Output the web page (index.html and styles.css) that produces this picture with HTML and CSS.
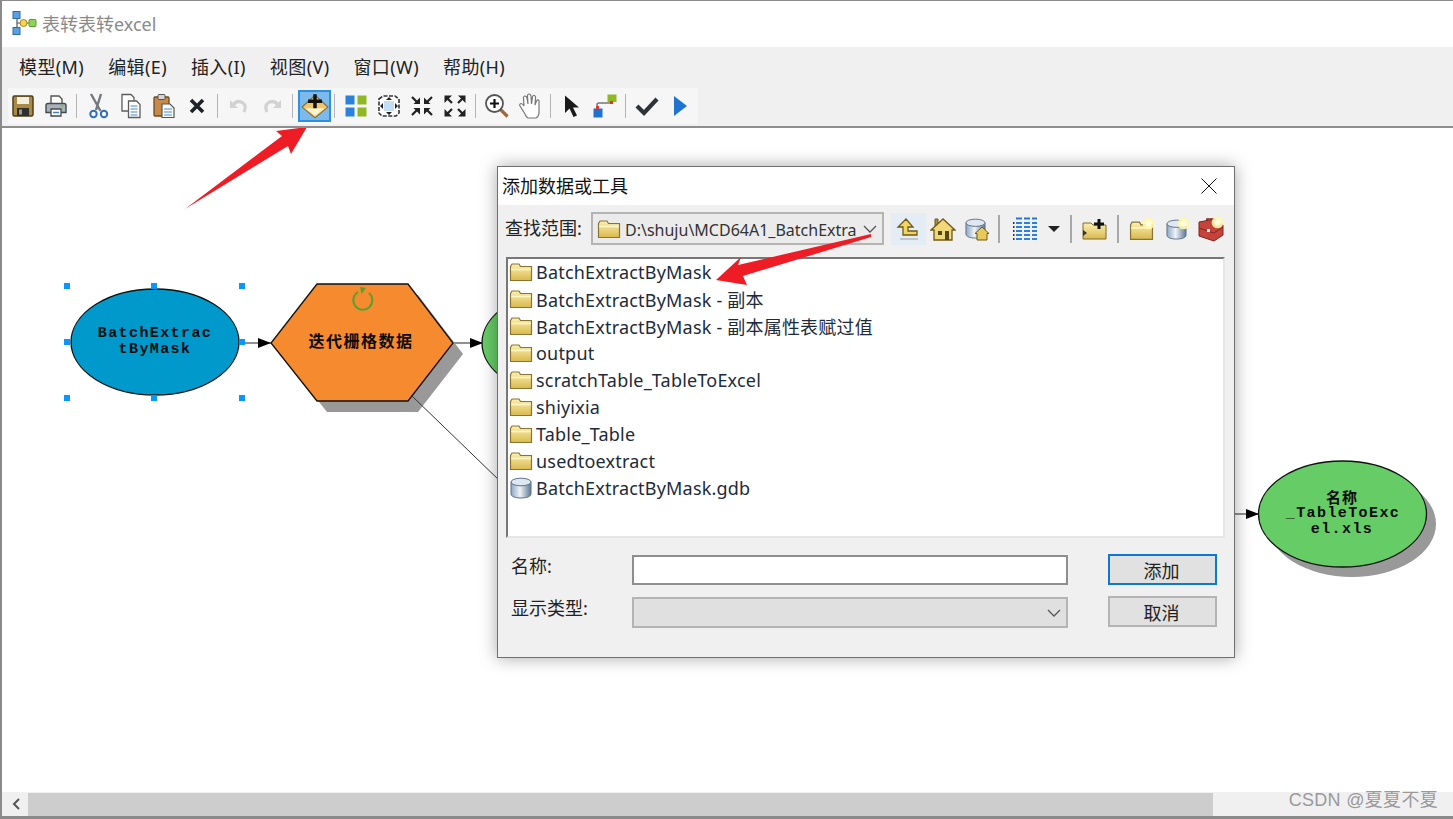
FILE: index.html
```html
<!DOCTYPE html>
<html lang="zh-CN">
<head>
  <meta charset="UTF-8">
  <title>表转表转excel</title>
  <link rel="stylesheet" href="styles.css">
</head>
<body>
  <!-- shared icon shapes -->
  <svg class="defs" width="0" height="0">
    <defs>
      <linearGradient id="gold" x1="0" y1="0" x2="0" y2="1">
        <stop offset="0" stop-color="#fbf0b0"/>
        <stop offset="1" stop-color="#d9b94f"/>
      </linearGradient>
      <linearGradient id="cyl" x1="0" y1="0" x2="1" y2="0">
        <stop offset="0" stop-color="#8fa6c0"/>
        <stop offset=".45" stop-color="#eef3f8"/>
        <stop offset="1" stop-color="#5f7794"/>
      </linearGradient>
      <symbol id="folder" viewBox="0 0 24 20">
        <path d="M1.500 4.500 3 2h7l1.500 2.500h11V18.500h-21z" fill="url(#gold)" stroke="#8a7433" stroke-width="1.200"/>
        <path d="M2 7.500h20" stroke="#fff6c8" stroke-width="1.500"/>
      </symbol>
      <symbol id="gdb" viewBox="0 0 24 22">
        <path d="M2 5v12c0 2.500 4.500 4 10 4s10-1.500 10-4V5z" fill="url(#cyl)" stroke="#5d728c"/>
        <ellipse cx="12" cy="5" rx="10" ry="3.800" fill="#dfe8f1" stroke="#5d728c"/>
      </symbol>
      <symbol id="spark" viewBox="0 0 10 10">
        <circle cx="5" cy="5" r="4.500" fill="#fff7a8" opacity=".9"/>
        <circle cx="5" cy="5" r="2.400" fill="#fffde0"/>
      </symbol>
    </defs>
  </svg>

  <div class="window">
    <div class="titlebar">
      <svg class="app-icon" width="26" height="26" viewBox="0 0 26 26">
        <path d="M5 5v16M5 13h16" stroke="#555" stroke-width="1.200" fill="none"/>
        <rect x="1" y="1.500" width="7" height="7" fill="#5c9fe0" stroke="#2d6cab"/>
        <rect x="1" y="17.500" width="7" height="7" fill="#5c9fe0" stroke="#2d6cab"/>
        <circle cx="11.500" cy="13" r="3.500" fill="#f6d64a" stroke="#a8871c"/>
        <rect x="17" y="9.500" width="7" height="7" rx="1" fill="#8ed05a" stroke="#5b9a2e"/>
      </svg>
      <span class="title-text">表转表转excel</span>
    </div>

    <div class="menubar">
      <span>模型(M)</span>
      <span>编辑(E)</span>
      <span>插入(I)</span>
      <span>视图(V)</span>
      <span>窗口(W)</span>
      <span>帮助(H)</span>
    </div>

    <div class="toolbar-row">
      <div class="toolbar">
        <div class="tb"><svg width="24" height="24" viewBox="0 0 24 24">
          <rect x="2" y="2" width="20" height="20" rx="1.500" fill="#a88a45" stroke="#4e3f1c" stroke-width="1.500"/>
          <rect x="6" y="3" width="12" height="7" fill="#f2eddc"/>
          <rect x="6" y="14" width="12" height="8" fill="#2f2f2f"/>
          <rect x="8" y="15.500" width="3" height="5" fill="#9a9a9a"/>
        </svg></div>
        <div class="tb"><svg width="24" height="24" viewBox="0 0 24 24">
          <path d="M7 10V2h8l3 3v5z" fill="#fff" stroke="#555" stroke-width="1.400"/>
          <path d="M2 11.500q0-2 2-2h16q2 0 2 2v7H2z" fill="#a9b1b8" stroke="#444a4e" stroke-width="1.400"/>
          <path d="M7 15h10v7H7z" fill="#fff" stroke="#444a4e" stroke-width="1.300"/>
          <path d="M9 18.500h6" stroke="#3a82c4" stroke-width="1.500"/>
          <circle cx="18.500" cy="12" r="1" fill="#63c04a"/>
        </svg></div>
        <i class="sep"></i>
        <div class="tb"><svg width="24" height="26" viewBox="0 0 24 26">
          <path d="M5 1l9.500 17M15 1 10 17" stroke="#74797e" stroke-width="2.400" fill="none"/>
          <circle cx="7.500" cy="21" r="3.200" fill="none" stroke="#2f6fb4" stroke-width="2"/>
          <circle cx="18" cy="21" r="3.200" fill="none" stroke="#2f6fb4" stroke-width="2"/>
        </svg></div>
        <div class="tb"><svg width="24" height="26" viewBox="0 0 24 26">
          <path d="M3 1.500h9l3 3V18H3z" fill="#fff" stroke="#5c5c5c" stroke-width="1.300"/>
          <path d="M9.500 8h8l3.500 3.500V24.500H9.500z" fill="#fff" stroke="#5c5c5c" stroke-width="1.300"/>
          <path d="M11.500 13h7M11.500 16h7M11.500 19h7M11.500 22h7" stroke="#4a86c5" stroke-width="1.200"/>
        </svg></div>
        <div class="tb"><svg width="24" height="26" viewBox="0 0 24 26">
          <rect x="2" y="4" width="15" height="19" rx="1" fill="#c48a4a" stroke="#6e4a20" stroke-width="1.300"/>
          <rect x="6" y="1.500" width="7" height="5" rx="1" fill="#d6d6d6" stroke="#555"/>
          <path d="M10 11h8l4 4v9.500H10z" fill="#fff" stroke="#555" stroke-width="1.200"/>
          <path d="M12 16h8M12 19h8M12 22h8" stroke="#4a86c5" stroke-width="1.200"/>
        </svg></div>
        <div class="tb"><svg width="18" height="18" viewBox="0 0 18 18">
          <path d="M3 3l12 12M15 3 3 15" stroke="#1e2226" stroke-width="3.600"/>
        </svg></div>
        <i class="sep"></i>
        <div class="tb"><svg width="24" height="24" viewBox="0 0 24 24">
          <path d="M5 12q5-7 11-3 4 3 1 9" fill="none" stroke="#d2d2d2" stroke-width="3.200"/>
          <path d="M3 6v8h8z" fill="#d2d2d2"/>
        </svg></div>
        <div class="tb"><svg width="24" height="24" viewBox="0 0 24 24">
          <path d="M19 12q-5-7-11-3-4 3-1 9" fill="none" stroke="#d2d2d2" stroke-width="3.200"/>
          <path d="M21 6v8h-8z" fill="#d2d2d2"/>
        </svg></div>
        <i class="sep"></i>
        <div class="tb tb-active"><svg width="28" height="28" viewBox="0 0 26 26">
          <path d="M13 3 25 14 13 24 1 14z" fill="#f0c768" stroke="#7d6a3a"/>
          <path d="M4 15h18l-9 7z" fill="#fdf3cf"/>
          <path d="M13 2v13M6.500 8.500h13" stroke="#111" stroke-width="3.200"/>
        </svg></div>
        <i class="sep"></i>
        <div class="tb"><svg width="24" height="24" viewBox="0 0 24 24">
          <rect x="1.500" y="1.500" width="9" height="9" fill="#2b82dc"/>
          <rect x="13.500" y="1.500" width="9" height="9" fill="#8fb822"/>
          <rect x="1.500" y="13.500" width="9" height="9" fill="#2b82dc"/>
          <rect x="13.500" y="13.500" width="9" height="9" fill="#8fb822"/>
        </svg></div>
        <div class="tb"><svg width="24" height="24" viewBox="0 0 24 24">
          <path d="M2 5l4-3h12l4 3v14l-3 3H5l-3-3z" fill="#fff" stroke="#333" stroke-width="1.600" stroke-dasharray="4 1.500"/>
          <rect x="7" y="7" width="10" height="10" fill="#c4dcf4"/>
          <path d="M12 3l3 3H9zM12 21l3-3H9zM3 12l3-3v6zM21 12l-3-3v6z" fill="#222"/>
        </svg></div>
        <div class="tb"><svg width="24" height="24" viewBox="0 0 24 24">
          <path d="M2 3l5 5M22 3l-5 5M2 21l5-5M22 21l-5-5" stroke="#222" stroke-width="2.200"/>
          <path d="M10 10V3.500L3.500 10zM14 10V3.500l6.500 6.500zM10 14v6.500L3.500 14zM14 14v6.500l6.500-6.500z" fill="#222"/>
        </svg></div>
        <div class="tb"><svg width="24" height="24" viewBox="0 0 24 24">
          <path d="M9 9 4 4M15 9l5-5M9 15l-5 5M15 15l5 5" stroke="#222" stroke-width="2.200"/>
          <path d="M1.500 1.500h7.500L1.500 9zM22.500 1.500H15l7.500 7.500zM1.500 22.500H9L1.500 15zM22.500 22.500H15l7.500-7.500z" fill="#222"/>
        </svg></div>
        <i class="sep"></i>
        <div class="tb"><svg width="26" height="26" viewBox="0 0 26 26">
          <path d="m16.500 16.500 7 7" stroke="#a5673a" stroke-width="3.200"/>
          <circle cx="10.500" cy="10.500" r="8.500" fill="#fff" stroke="#555" stroke-width="1.800"/>
          <path d="M10.500 6v9M6 10.500h9" stroke="#111" stroke-width="2.200"/>
        </svg></div>
        <div class="tb"><svg width="26" height="26" viewBox="0 0 26 26">
          <path d="M8 21 3 13q-1-2 1-2.500 1.500 0 3 2.500L6.500 5q0-2 1.500-2 1.500 0 2 2l1 6-.5-8q0-2 1.500-2t2 2l.5 8 1-7q.5-2 2-1.500 1.500.5 1 2.500l-.5 7 1.500-4q1-1.500 2-1 1 .5.500 2.500L22 20q-.5 4-3 5H11q-2-1-3-4z" fill="#fff" stroke="#777" stroke-width="1.200"/>
        </svg></div>
        <i class="sep"></i>
        <div class="tb"><svg width="20" height="24" viewBox="0 0 20 24">
          <path d="M3 1.500 17 13.500h-6l4 8-3.500 1.500-4-8.500L3 19z" fill="#1a1a1a"/>
        </svg></div>
        <div class="tb"><svg width="26" height="26" viewBox="0 0 26 26">
          <path d="M5 17v-5q0-2 2-2h10q2 0 2-2V6" fill="none" stroke="#777" stroke-width="1.500"/>
          <rect x="1.500" y="15.500" width="9" height="9" fill="#1f73d0"/>
          <rect x="15.500" y="1.500" width="9" height="7.500" fill="#8fb822"/>
          <rect x="4" y="13" width="3" height="3" fill="#e5322d"/>
          <rect x="18" y="8" width="3" height="3" fill="#e5322d"/>
        </svg></div>
        <i class="sep"></i>
        <div class="tb"><svg width="24" height="22" viewBox="0 0 24 22">
          <path d="M2 11l7 7L22 4" fill="none" stroke="#2e3338" stroke-width="4.200"/>
        </svg></div>
        <div class="tb"><svg width="16" height="24" viewBox="0 0 16 24">
          <path d="M2 2 15 12 2 22z" fill="#1f74d2"/>
        </svg></div>
      </div>
    </div>

    <div class="canvas">
      <svg class="model" viewBox="0 127 1453 666" preserveAspectRatio="none">
        <!-- connectors -->
        <path class="link" d="M238 342h33M453 342h30M1235 513h24"/>
        <path d="M258 337l13 5-13 5zM470 337l13 5-13 5zM1246 508l13 5-13 5z" fill="#000"/>

        <!-- input data -->
        <ellipse class="oval-blue" cx="155" cy="341" rx="84" ry="53"/>
        <text class="node-en" x="155" y="336">BatchExtrac</text>
        <text class="node-en" x="155" y="352">tByMask</text>
        <rect class="handle" x="64" y="282" width="6" height="6"/>
        <rect class="handle" x="151" y="282" width="6" height="6"/>
        <rect class="handle" x="239" y="282" width="6" height="6"/>
        <rect class="handle" x="64" y="338" width="6" height="6"/>
        <rect class="handle" x="239" y="338" width="6" height="6"/>
        <rect class="handle" x="64" y="394" width="6" height="6"/>
        <rect class="handle" x="151" y="394" width="6" height="6"/>
        <rect class="handle" x="239" y="394" width="6" height="6"/>

        <!-- iterator -->
        <polygon class="shadow" points="327,294 418,294 463,353 418,411 327,411 281,353"/>
        <polygon class="hex" points="317,283 408,283 453,342 408,400 317,400 271,342"/>
        <path class="link link-thin" d="M412 395l90 87"/>
        <path d="M369 292a9.500 9.500 0 1 1-11-1" fill="none" stroke="#5aa02c" stroke-width="2"/>
        <path d="M360 286l1.500 7 4.500-6z" fill="#5aa02c"/>
        <text class="node-cn" x="361" y="346">迭代栅格数据</text>

        <!-- hidden behind the dialog -->
        <ellipse class="oval-green" cx="566" cy="342" rx="84" ry="53"/>

        <!-- output -->
        <ellipse class="shadow" cx="1352" cy="523" rx="84" ry="53"/>
        <ellipse class="oval-green" cx="1342.500" cy="513" rx="84" ry="53"/>
        <text class="node-cn node-small" x="1342" y="502">名称</text>
        <text class="node-en" x="1343" y="516">_TableToExc</text>
        <text class="node-en" x="1342" y="532">el.xls</text>
      </svg>

      <div class="dialog">
        <div class="dlg-title">
          <span>添加数据或工具</span>
          <svg width="16" height="16" viewBox="0 0 16 16"><path d="M.5.500l15 15M15.500.500l-15 15" stroke="#111" stroke-width="1"/></svg>
        </div>
        <div class="dlg-body">
          <div class="lookup">
            <label class="lookup-label">查找范围:</label>
            <div class="combo">
              <svg class="combo-icon" width="24" height="20"><use href="#folder"/></svg>
              <span class="combo-text">D:\shuju\MCD64A1_BatchExtra</span>
              <svg class="chev" width="14" height="8" viewBox="0 0 14 8"><path d="M1 1l6 6 6-6" fill="none" stroke="#555" stroke-width="1.300"/></svg>
            </div>
            <div class="dlg-tools">
              <div class="dt dt-on"><svg width="24" height="24" viewBox="0 0 24 24">
                <path d="M10 2 2 10h5v8h14v-4H12v-4h5z" fill="#f0d660" stroke="#6e5a14" stroke-width="1.300"/>
                <path d="M4 22h18" stroke="#aaa" stroke-width="1.200"/>
              </svg></div>
              <div class="dt"><svg width="26" height="24" viewBox="0 0 26 24">
                <path d="M5 11V2h3v5z" fill="#a88f3e" stroke="#6e5a14"/>
                <path d="M13 2 1 13h3v10h18V13h3z" fill="#f0d878" stroke="#6e5a14" stroke-width="1.300"/>
                <rect x="8" y="14" width="4" height="4" fill="#54461a"/>
                <rect x="15" y="14" width="4" height="9" fill="#54461a"/>
              </svg></div>
              <div class="dt"><svg width="26" height="24" viewBox="0 0 26 24">
                <use href="#gdb" x="0" y="1" width="23" height="21"/>
                <path d="M18 10l-7 6.500h2V23h10v-6.500h2z" fill="#e8ca5a" stroke="#6e5a14"/>
              </svg></div>
              <i class="sep sep-dlg"></i>
              <div class="dt dt-grid"><svg width="26" height="24" viewBox="0 0 26 24">
                <path d="M4 1.500h6M12 1.500h6M20 1.500h5" stroke="#2a74c8" stroke-width="2"/>
                <path d="M4 6h6M12 6h6M20 6h5M4 10h6M12 10h6M20 10h5M4 14h6M12 14h6M20 14h5M4 18h6M12 18h6M20 18h5M4 22h6M12 22h6M20 22h5" stroke="#2e80d6" stroke-width="2.200"/>
                <path d="M1 6h1.500M1 10h1.500M1 14h1.500M1 18h1.500M1 22h1.500" stroke="#333" stroke-width="2"/>
              </svg></div>
              <div class="caret"></div>
              <i class="sep sep-dlg"></i>
              <div class="dt"><svg width="26" height="24" viewBox="0 0 26 24">
                <path d="M2 22V6h8l2 2h13v14z" fill="url(#gold)" stroke="#7d6a2a"/>
                <path d="M2 13l4 3-4 3z" fill="#333"/>
                <path d="M18 2v10M13 7h10" stroke="#111" stroke-width="3"/>
              </svg></div>
              <i class="sep sep-dlg sep-wide"></i>
              <div class="dt"><svg width="26" height="24" viewBox="0 0 26 24">
                <use href="#folder" x="0" y="3" width="25" height="21"/>
                <use href="#spark" x="13" y="0" width="13" height="13"/>
              </svg></div>
              <div class="dt"><svg width="26" height="24" viewBox="0 0 26 24">
                <use href="#gdb" x="1" y="2" width="23" height="21"/>
                <use href="#spark" x="13" y="0" width="13" height="13"/>
              </svg></div>
              <div class="dt"><svg width="26" height="26" viewBox="0 0 26 26">
                <path d="M9 6V3h7v3" fill="none" stroke="#7e2620" stroke-width="1.600"/>
                <path d="M1 6l16-3 8 6v10l-9 6-15-5z" fill="#c5433a" stroke="#7e2620"/>
                <path d="M1 12l15 5 9-6" fill="none" stroke="#7e2620"/>
                <rect x="9" y="13" width="3" height="3" fill="#eee"/>
                <use href="#spark" x="13" y="0" width="13" height="13"/>
              </svg></div>
            </div>
          </div>

          <div class="file-list">
            <div class="file"><svg width="24" height="20"><use href="#folder"/></svg><span>BatchExtractByMask</span></div>
            <div class="file"><svg width="24" height="20"><use href="#folder"/></svg><span>BatchExtractByMask - 副本</span></div>
            <div class="file"><svg width="24" height="20"><use href="#folder"/></svg><span>BatchExtractByMask - 副本属性表赋过值</span></div>
            <div class="file"><svg width="24" height="20"><use href="#folder"/></svg><span>output</span></div>
            <div class="file"><svg width="24" height="20"><use href="#folder"/></svg><span>scratchTable_TableToExcel</span></div>
            <div class="file"><svg width="24" height="20"><use href="#folder"/></svg><span>shiyixia</span></div>
            <div class="file"><svg width="24" height="20"><use href="#folder"/></svg><span>Table_Table</span></div>
            <div class="file"><svg width="24" height="20"><use href="#folder"/></svg><span>usedtoextract</span></div>
            <div class="file"><svg width="24" height="22"><use href="#gdb"/></svg><span>BatchExtractByMask.gdb</span></div>
          </div>

          <div class="form">
            <label class="form-label">名称:</label>
            <div class="input"></div>
            <div class="btn btn-default">添加</div>
            <label class="form-label">显示类型:</label>
            <div class="select">
              <svg width="14" height="8" viewBox="0 0 14 8"><path d="M1 1l6 6 6-6" fill="none" stroke="#555" stroke-width="1.300"/></svg>
            </div>
            <div class="btn">取消</div>
          </div>
        </div>
      </div>

      <!-- annotation arrows -->
      <svg class="marks" viewBox="0 127 1453 666" preserveAspectRatio="none">
        <polygon fill="#ee1c25" points="185,208 282,135 276,130 307,126 291,153 288,145"/>
        <polygon fill="#ee1c25" points="871,233 738,264 741,256 716,279 747,284 743,275 871,236"/>
      </svg>
    </div>

    <div class="hscroll">
      <svg width="24" height="24" viewBox="0 0 24 24"><path d="M15 7l-5 5 5 5" fill="none" stroke="#555" stroke-width="2"/></svg>
      <div class="hscroll-thumb"></div>
    </div>
  </div>

  <div class="watermark">CSDN @夏夏不夏</div>
</body>
</html>
```

FILE: styles.css
```css
body {
  margin: 0;
  padding: 0;
  background: #fff;
  font-family: "Noto Sans", "Noto Sans CJK SC", sans-serif;
  color: #222;
  overflow: hidden;
}

.defs {
  position: absolute;
}

.window {
  height: 819px;
  display: flex;
  flex-direction: column;
  box-sizing: border-box;
  border-top: 1px solid #8a8a8a;
  border-left: 2px solid #8a8a8a;
  border-bottom: 3px solid #8a8a8a;
  position: relative;
}

.titlebar {
  height: 46px;
  box-sizing: border-box;
  display: flex;
  align-items: center;
  padding: 0 0 2px 10px;
  gap: 4px;
  flex-shrink: 0;
}

.title-text {
  font-size: 18px;
  color: #8a8a8a;
}

.menubar {
  height: 41px;
  box-sizing: border-box;
  flex-shrink: 0;
  background: #f0f0f0;
  display: flex;
  align-items: center;
  gap: 24px;
  padding: 0 0 3px 17px;
  font-size: 18px;
  letter-spacing: 0.4px;
}

.toolbar-row {
  height: 38px;
  flex-shrink: 0;
  background: #f0f0f0;
  border-bottom: 2px solid #8e8e8e;
  box-sizing: content-box;
}

.toolbar {
  width: 690px;
  height: 36px;
  margin-left: 6px;
  background: #f6f6f6;
  display: flex;
  align-items: center;
}

.tb {
  width: 33px;
  height: 32px;
  display: flex;
  align-items: center;
  justify-content: center;
  flex-shrink: 0;
}

.tb:first-child {
  margin-left: -2px;
}

.tb-active {
  box-sizing: border-box;
  background: #7db9ea;
  border: 2px solid #2b90e0;
  margin-left: 1px;
  margin-right: -1px;
}

.sep {
  width: 1px;
  height: 24px;
  margin: 0 4px;
  background: #b5b5b5;
  flex-shrink: 0;
}

.canvas {
  flex: 1;
  position: relative;
  overflow: hidden;
  background: #fff;
}

.model,
.marks {
  display: block;
  width: 1453px;
  height: 666px;
  margin-left: -2px;
}

.marks {
  position: absolute;
  left: 0;
  top: 0;
  pointer-events: none;
}

.link {
  fill: none;
  stroke: #222;
  stroke-width: 1.200;
}

.link-thin {
  stroke: #333;
  stroke-width: 1;
}

.oval-blue {
  fill: #0099cc;
  stroke: #111;
  stroke-width: 1.300;
}

.oval-green {
  fill: #66cc66;
  stroke: #111;
  stroke-width: 1.300;
}

.hex {
  fill: #f68a2e;
  stroke: #111;
  stroke-width: 1.300;
}

.shadow {
  fill: #999;
}

.handle {
  fill: #0a96ff;
}

.node-en {
  font-family: "Liberation Mono", monospace;
  font-weight: bold;
  font-size: 15px;
  letter-spacing: 1.400px;
  text-anchor: middle;
  fill: #0c0c0c;
}

.node-cn {
  font-family: "Noto Sans CJK SC", sans-serif;
  font-weight: bold;
  font-size: 16px;
  letter-spacing: 1.500px;
  text-anchor: middle;
  fill: #0c0c0c;
}

.node-small {
  font-size: 15px;
  letter-spacing: 1px;
}

/* dialog sits over the model */
.dialog {
  position: absolute;
  left: 495px;
  top: 38px;
  width: 738px;
  height: 492px;
  box-sizing: border-box;
  border: 1px solid #6f6f6f;
  background: #f0f0f0;
  box-shadow: 0 0 16px rgba(0, 0, 0, 0.35);
  display: flex;
  flex-direction: column;
}

.dlg-title {
  height: 38px;
  box-sizing: border-box;
  flex-shrink: 0;
  background: #fff;
  display: flex;
  align-items: center;
  justify-content: space-between;
  padding: 0 17px 3px 4px;
  font-size: 18px;
  color: #111;
}

.dlg-title svg {
  margin-top: 3px;
}

.dlg-body {
  padding: 7px 0 0 8px;
}

.lookup {
  height: 33px;
  display: flex;
  align-items: center;
}

.lookup-label {
  width: 86px;
  margin-left: -1px;
  padding-bottom: 3px;
  font-size: 18px;
  color: #222;
}

.combo {
  width: 293px;
  height: 33px;
  box-sizing: border-box;
  border: 2px solid #b4b4b4;
  background: #ebebeb;
  display: flex;
  align-items: center;
  padding: 0 5px 0 4px;
  gap: 4px;
  flex-shrink: 0;
}

.combo-icon {
  flex-shrink: 0;
}

.combo-text {
  flex: 1;
  padding-top: 2px;
  font-size: 16px;
  color: #333;
  white-space: nowrap;
}

.chev {
  flex-shrink: 0;
}

.dlg-tools {
  display: flex;
  align-items: center;
  margin-left: 7px;
}

.dt {
  width: 34.500px;
  height: 32px;
  display: flex;
  align-items: center;
  justify-content: center;
  flex-shrink: 0;
}

.dt-on {
  background: #e4edf5;
}

.dt-grid {
  width: 41px;
}

.caret {
  width: 0;
  height: 0;
  border-left: 6px solid transparent;
  border-right: 6px solid transparent;
  border-top: 6px solid #222;
  margin: 0 7px 0 2px;
}

.sep-dlg {
  height: 28px;
  width: 2px;
  margin: 0 5px 0 3px;
  background: #a8a8a8;
}

.sep-wide {
  margin: 0 6px;
}

.file-list {
  width: 719px;
  height: 281px;
  box-sizing: border-box;
  margin-top: 12px;
  background: #fff;
  border-left: 2px solid #777;
  border-top: 2px solid #777;
  border-right: 2px solid #e6e6e6;
  border-bottom: 2px solid #e6e6e6;
}

.file {
  height: 27px;
  box-sizing: border-box;
  display: flex;
  align-items: center;
  gap: 3px;
  padding: 0 0 2px 1px;
  font-size: 18px;
  letter-spacing: 0.2px;
  color: #1c2b3a;
  white-space: nowrap;
}

.form {
  display: grid;
  grid-template-columns: 81px 436px 109px;
  grid-template-rows: 31px 31px;
  column-gap: 40px;
  row-gap: 11px;
  margin: 16px 0 0 5px;
}

.form-label {
  font-size: 18px;
  line-height: 24px;
  color: #222;
  white-space: nowrap;
}

.input {
  box-sizing: border-box;
  margin-top: 1px;
  background: #fff;
  border: 2px solid #8e8e8e;
}

.select {
  box-sizing: border-box;
  margin: 1px 0 -1px;
  background: #e0e0e0;
  border: 2px solid #b4b4b4;
  display: flex;
  align-items: center;
  justify-content: flex-end;
  padding-right: 5px;
}

.btn {
  box-sizing: border-box;
  background: #e1e1e1;
  border: 2px solid #b4b4b4;
  display: flex;
  align-items: center;
  justify-content: center;
  padding-right: 2px;
  font-size: 18px;
  color: #222;
}

.btn-default {
  border-color: #0b78d4;
}

.hscroll {
  height: 24px;
  flex-shrink: 0;
  background: #f0f0f0;
  display: flex;
  align-items: center;
  padding-left: 2px;
}

.hscroll-thumb {
  width: 1185px;
  height: 23px;
  background: #cdcdcd;
}

.watermark {
  position: absolute;
  right: 15px;
  top: 785px;
  font-size: 18px;
  letter-spacing: 0.3px;
  color: #9a9a9a;
  font-family: "Liberation Sans", "Noto Sans CJK SC", sans-serif;
}
```
